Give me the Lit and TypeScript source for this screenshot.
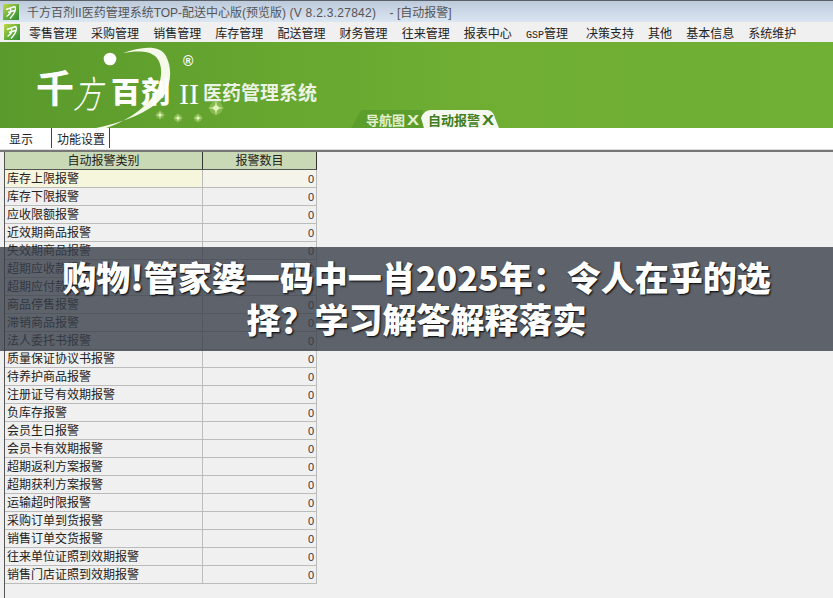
import { LitElement, html, css, svg } from "lit";
import { customElement } from "lit/decorators.js";

const MENU = ["零售管理","采购管理","销售管理","库存管理","配送管理","财务管理","往来管理","报表中心","GSP管理","决策支持","其他","基本信息","系统维护"];
const ROWS = ["库存上限报警","库存下限报警","应收限额报警","近效期商品报警","失效期商品报警","超期应收款报警","超期应付款报警","商品停售报警","滞销商品报警","法人委托书报警","质量保证协议书报警","待养护商品报警","注册证号有效期报警","负库存报警","会员生日报警","会员卡有效期报警","超期返利方案报警","超期获利方案报警","运输超时限报警","采购订单到货报警","销售订单交货报警","往来单位证照到效期报警","销售门店证照到效期报警"];

const appIcon = html`<svg class="icon" viewBox="0 0 16 16" width="16" height="16">
  <defs><linearGradient id="ig" x1="0" y1="0" x2="1" y2="1"><stop offset="0" stop-color="#c2d94a"/><stop offset=".55" stop-color="#62ad3a"/><stop offset="1" stop-color="#2f8a3a"/></linearGradient></defs>
  <rect width="16" height="16" fill="url(#ig)"/>
  <path d="M3 5.5 L12 2.5 M5 8.5 L11.5 6.5 M12 2.5 Q14 7 7 14.5 M7.5 5 Q9 9 3.5 12.5" fill="none" stroke="#fff" stroke-width="1.4"/>
</svg>`;

const star = (x: number, y: number, r: number) => svg`
  <circle cx=${x} cy=${y} r=${r * 1.1} fill="#d8f0a0" opacity=".3"/>
  <circle cx=${x} cy=${y} r=${r * .45} fill="#eaffc0" opacity=".85"/>
  <path d="M${x - r * 1.4} ${y} L${x} ${y - r * .2} L${x + r * 1.4} ${y} L${x} ${y + r * .2}Z M${x} ${y - r * 1.4} L${x + r * .2} ${y} L${x} ${y + r * 1.4} L${x - r * .2} ${y}Z" fill="#e6f8c0" opacity=".8"/>`;

@customElement("app-root")
export class AppRoot extends LitElement {
  static styles = css`
    :host { display: block; width: 833px; height: 598px; position: relative; overflow: hidden; background: #f0f0f0;
      font-family: "Liberation Sans", "Noto Sans CJK SC", sans-serif; font-size: 12px; color: #222; }
    .page { display: flex; flex-direction: column; height: 598px; }
    .titlebar { height: 21px; flex: none; border-top: 1px solid #5a6068; display: flex; align-items: center; gap: 8px; padding-left: 3px;
      background: linear-gradient(#bccadb, #dbe6f2); color: #555; white-space: pre; font-size: 12px; }
    .ver { letter-spacing: .27px; }
    .menubar { height: 20px; flex: none; background: #f0f0f0; display: flex; align-items: center; padding-left: 4px; color: #222; white-space: nowrap; }
    .menubar .icon { margin-right: 9px; }
    .menu { display: flex; gap: 14.1px; }
    .menu .gsp { width: 46px; }
    .menu .gsp i { font: 10px "Liberation Mono", monospace; }
    .banner { height: 86px; flex: none; display: flex; align-items: flex-end;
      background: linear-gradient(90deg, #5a9a2c 0%, #66a52f 30%, #6fae33 55%, #70b034 100%); }
    .logo { display: block; flex: none; }
    .logo text { font-family: "Noto Sans CJK SC", sans-serif; fill: #fff; }
    .logo .roman { font-family: "Liberation Serif", serif; }
    .logo .mark { font-family: "Liberation Sans", sans-serif; }
    .tabs { display: flex; margin-left: 11px; align-items: flex-end; }
    .tab { height: 18px; display: flex; align-items: center; font-size: 13px; font-weight: 700; white-space: nowrap; font-family: "Noto Sans CJK SC", sans-serif; }
    .tab.nav { width: 72px; padding-left: 15px; box-sizing: border-box; color: #e4f0d2; background: #5c9e2b;
      clip-path: path("M0 18 L9 2 Q10 0 12 0 L72 0 L72 18 Z"); }
    .tab.cur { width: 78px; margin-left: -2px; padding-left: 7px; box-sizing: border-box; color: #3f7d1e; background: #f4f8ee;
      clip-path: path("M3 18 L0 8 Q3 0 10 0 L66 0 Q72 0 74 8 L78 18 Z"); }
    .tab b { font-family: "Liberation Sans", sans-serif; font-size: 15px; font-weight: 700; line-height: 18px; margin: 2px 0 0 3px; transform: scaleX(1.2); }
    .subtabs { height: 21px; flex: none; background: #fff; border-bottom: 1px solid #ddd; display: flex; align-items: stretch; padding-left: 9px; }
    .st { display: flex; align-items: center; height: 20px; }
    .st.a { width: 42px; border-right: 1px solid #444; }
    .st.b { width: 52px; padding-left: 5px; border-right: 1px solid #444; }
    .main { flex: 1; background: #f0f0f0; border-top: 2px solid #777; padding-left: 4px; display: flex; }
    .pane { flex: 1; border-left: 1px solid #555; }
    .grid { width: 312px; display: grid; grid-template-columns: 198px 114px; grid-auto-rows: 18px; }
    .h { background: #c9d9b6; border-right: 1px solid #333; border-bottom: 1px solid #555; text-align: center; line-height: 19px; box-sizing: border-box; overflow: hidden; }
    .c { border-right: 1px solid #bbb; border-bottom: 1px solid #bbb; box-sizing: border-box; line-height: 19px; padding-left: 2px; white-space: nowrap; overflow: hidden; }
    .n { text-align: right; padding-right: 2px; font-size: 11px; color: #333; }
    .first.c { background: #f6f6dd; } .first.n { background: #f4f4ea; }
    .band { position: absolute; left: 0; top: 247px; width: 833px; box-sizing: border-box; padding: 9px 60px 11px; background: rgba(56,62,74,.8);
      color: #fff; font-family: "Noto Sans CJK SC", sans-serif; font-weight: 900; font-size: 34px; line-height: 42px; text-align: center; text-shadow: 1px 1px 2px #000; }
  `;

  render() {
    return html`<div class="page">
      <div class="titlebar">${appIcon}<span>千方百剂II医药管理系统TOP-配送中心版(预览版) <span class="ver">(V 8.2.3.27842)</span>    - [自动报警]</span></div>
      <div class="menubar">${appIcon}<div class="menu">${MENU.map(m => m.startsWith("GSP") ? html`<span class="gsp"><i>GSP</i>管理</span>` : html`<span>${m}</span>`)}</div></div>
      <div class="banner">
        <svg class="logo" width="340" height="86" viewBox="0 42 340 86">
          <defs><clipPath id="bc"><rect x="0" y="42" width="340" height="86"/></clipPath></defs>
          <g clip-path="url(#bc)">
            <path d="M123 53 C140 47 160 44 166 56 C172 68 171 80 166 92 C158 108 130 122 86 130 L100 130 C128 122 150 105 158 88 C163 74 162 62 155 56 C148 50 135 51 123 53Z" fill="#f4f9ea"/>
            <circle cx="110" cy="59" r="6.3" fill="#fff"/>
            <text x="36" y="102" font-size="38" font-weight="700">千</text>
            <text transform="translate(73 108) skewX(-12) scale(1 1.3)" font-size="29" font-weight="300">方</text>
            <text x="111" y="103" font-size="29" font-weight="900">百</text>
            <text x="141" y="103" font-size="29" font-weight="900">剂</text>
            <text class="roman" x="179" y="104" font-size="30">II</text>
            <text class="mark" x="183" y="66" font-size="14" font-weight="700">®</text>
            <text x="203" y="100" font-size="19" font-weight="700" fill-opacity=".88">医药管理系统</text>
            ${star(160, 115, 3.5)}${star(178, 118, 3.5)}${star(198, 118, 3.5)}${star(216, 108, 6)}
          </g>
        </svg>
        <div class="tabs">
          <div class="tab nav">导航图<b>X</b></div>
          <div class="tab cur">自动报警<b>X</b></div>
        </div>
      </div>
      <div class="subtabs"><div class="st a">显示</div><div class="st b">功能设置</div></div>
      <div class="main"><div class="pane"><div class="grid">
        <div class="h">自动报警类别</div><div class="h">报警数目</div>
        ${ROWS.map((r, i) => html`<div class="c ${i === 0 ? "first" : ""}">${r}</div><div class="c n ${i === 0 ? "first" : ""}">0</div>`)}
      </div></div></div>
    </div>
    <div class="band">购物!管家婆一码中一肖2025年：令人在乎的选择？学习解答解释落实</div>`;
  }
}
